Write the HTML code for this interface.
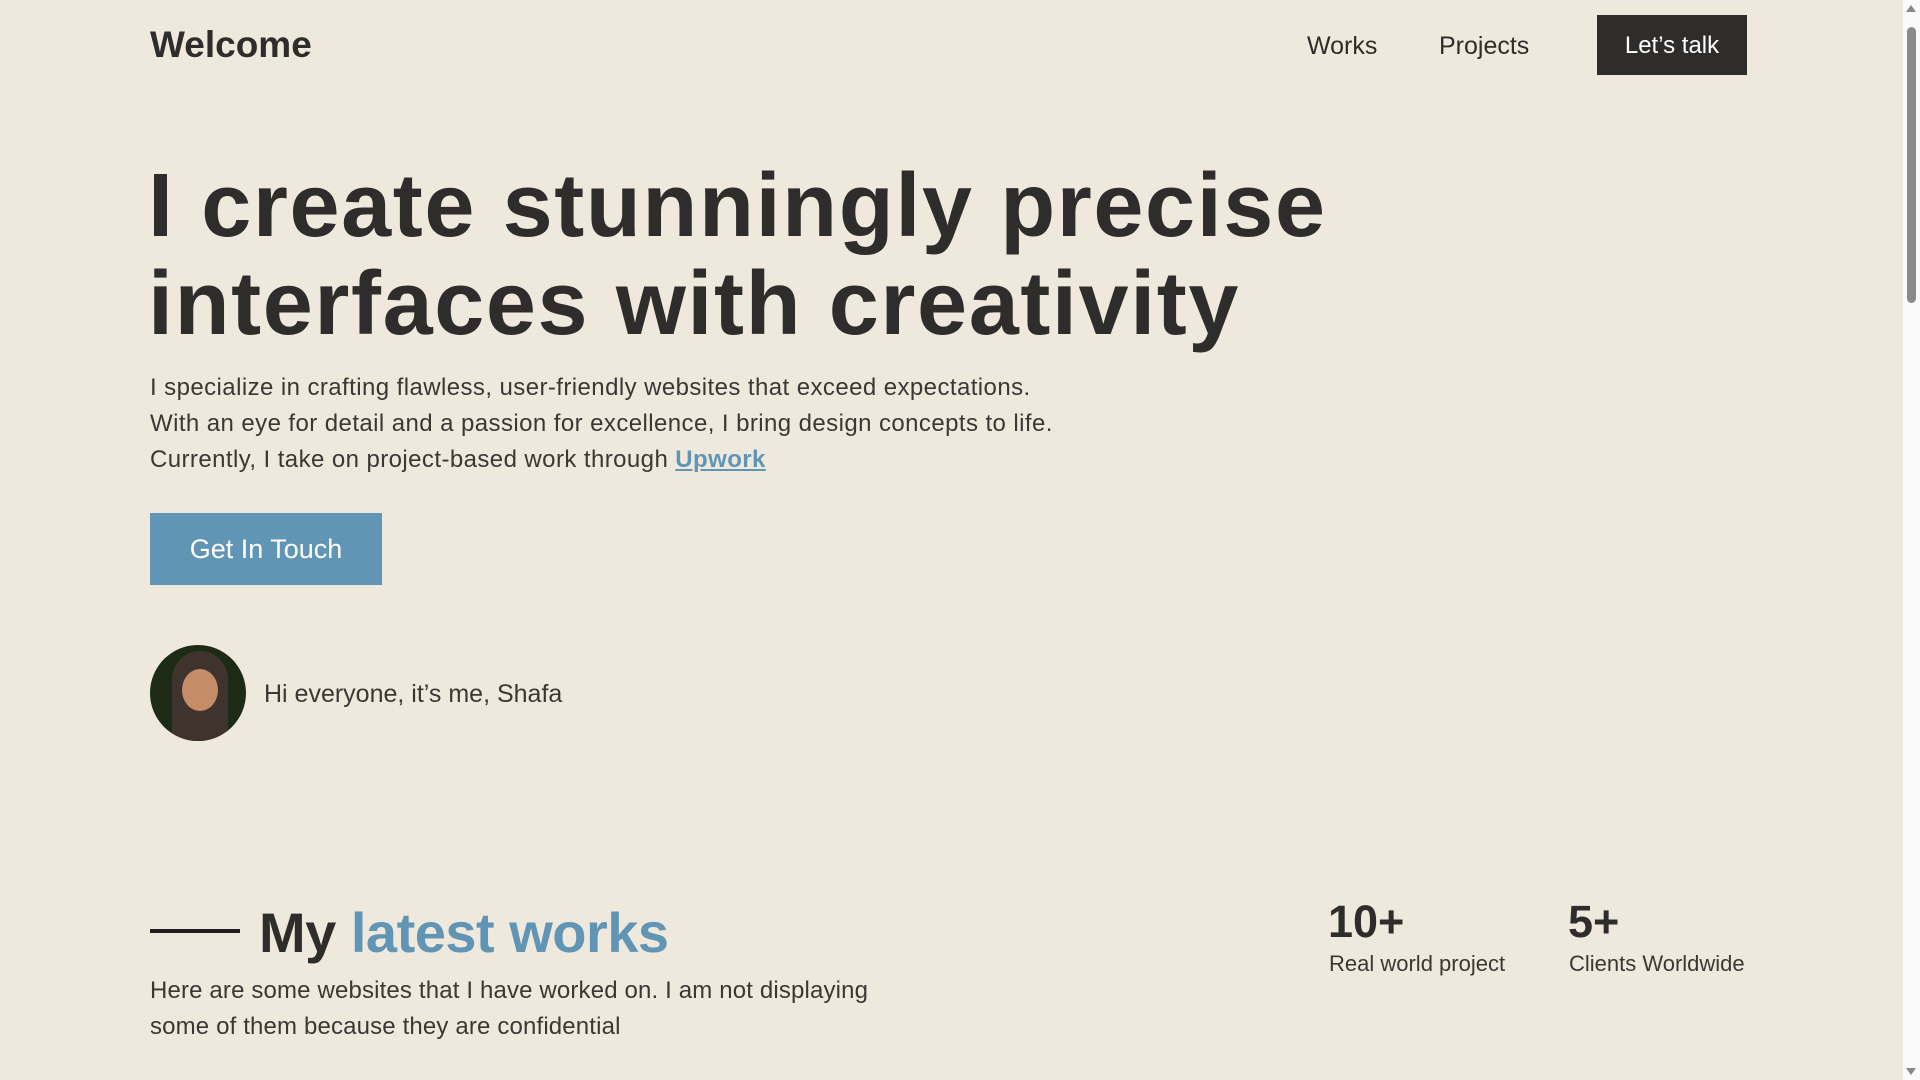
<!DOCTYPE html>
<html><head><meta charset="utf-8"><style>
html,body{margin:0;padding:0}
body{width:1920px;height:1080px;overflow:hidden;background:#efe9dd;font-family:"Liberation Sans",sans-serif;color:#2f2d2b;position:relative}
.a{position:absolute;white-space:nowrap}
.sb{position:absolute;right:0;top:0;width:17px;height:1080px;background:#fafafa}
</style></head><body>
<div class="a" style="left:150px;top:24px;font-size:37px;font-weight:bold;letter-spacing:0px">Welcome</div>
<div class="a" style="left:1307px;top:32px;font-size:25px">Works</div>
<div class="a" style="left:1439px;top:32px;font-size:25px">Projects</div>
<div class="a" style="left:1597px;top:15px;width:150px;height:60px;background:#2f2d2b;color:#fff;font-size:24px;text-align:center;line-height:62px">Let’s talk</div>
<div class="a" style="left:148px;top:157px;font-size:90px;font-weight:bold;letter-spacing:1.6px;line-height:98px">I create stunningly precise<br>interfaces with creativity</div>
<div class="a" style="left:150px;top:370px;font-size:24px;line-height:36px;color:#3a3835;letter-spacing:0.42px">I specialize in crafting flawless, user-friendly websites that exceed expectations.<br>With an eye for detail and a passion for excellence, I bring design concepts to life.<br>Currently, I take on project-based work through <span style="color:#6195b5;text-decoration:underline;font-weight:bold">Upwork</span></div>
<div class="a" style="left:150px;top:513px;width:232px;height:72px;background:#6195b5;color:#fff;font-size:27px;line-height:72px;text-align:center">Get In Touch</div>
<div class="a" style="left:150px;top:645px;width:96px;height:96px;border-radius:50%;overflow:hidden;background:#1d2a16">
<div style="position:absolute;left:22px;top:6px;width:56px;height:100px;border-radius:28px 28px 10px 10px;background:#3f342d"></div>
<div style="position:absolute;left:32px;top:24px;width:36px;height:42px;border-radius:50%;background:#c48c68"></div>
</div>
<div class="a" style="left:264px;top:680px;font-size:25px;color:#3a3835">Hi everyone, it’s me, Shafa</div>
<div class="a" style="left:150px;top:929px;width:90px;height:4px;background:#1f1d1b"></div>
<div class="a" style="left:259px;top:900px;font-size:56px;font-weight:bold;letter-spacing:-0.5px">My <span style="color:#6195b5">latest works</span></div>
<div class="a" style="left:150px;top:973px;font-size:24px;line-height:36px;color:#3a3835;letter-spacing:0.15px">Here are some websites that I have worked on. I am not displaying<br>some of them because they are confidential</div>
<div class="a" style="left:1328px;top:896px;font-size:45px;font-weight:bold">10+</div>
<div class="a" style="left:1329px;top:951px;font-size:22px;color:#3a3835">Real world project</div>
<div class="a" style="left:1568px;top:896px;font-size:45px;font-weight:bold">5+</div>
<div class="a" style="left:1569px;top:951px;font-size:22px;color:#3a3835">Clients Worldwide</div>
<div class="sb"><div style="position:absolute;left:4px;top:27px;width:9px;height:276px;border-radius:5px;background:#8a8a8a"></div>
<div style="position:absolute;left:3px;top:5px;width:0;height:0;border-left:5px solid transparent;border-right:5px solid transparent;border-bottom:7px solid #888"></div>
<div style="position:absolute;left:3px;bottom:5px;width:0;height:0;border-left:5px solid transparent;border-right:5px solid transparent;border-top:7px solid #888"></div></div>
</body></html>
